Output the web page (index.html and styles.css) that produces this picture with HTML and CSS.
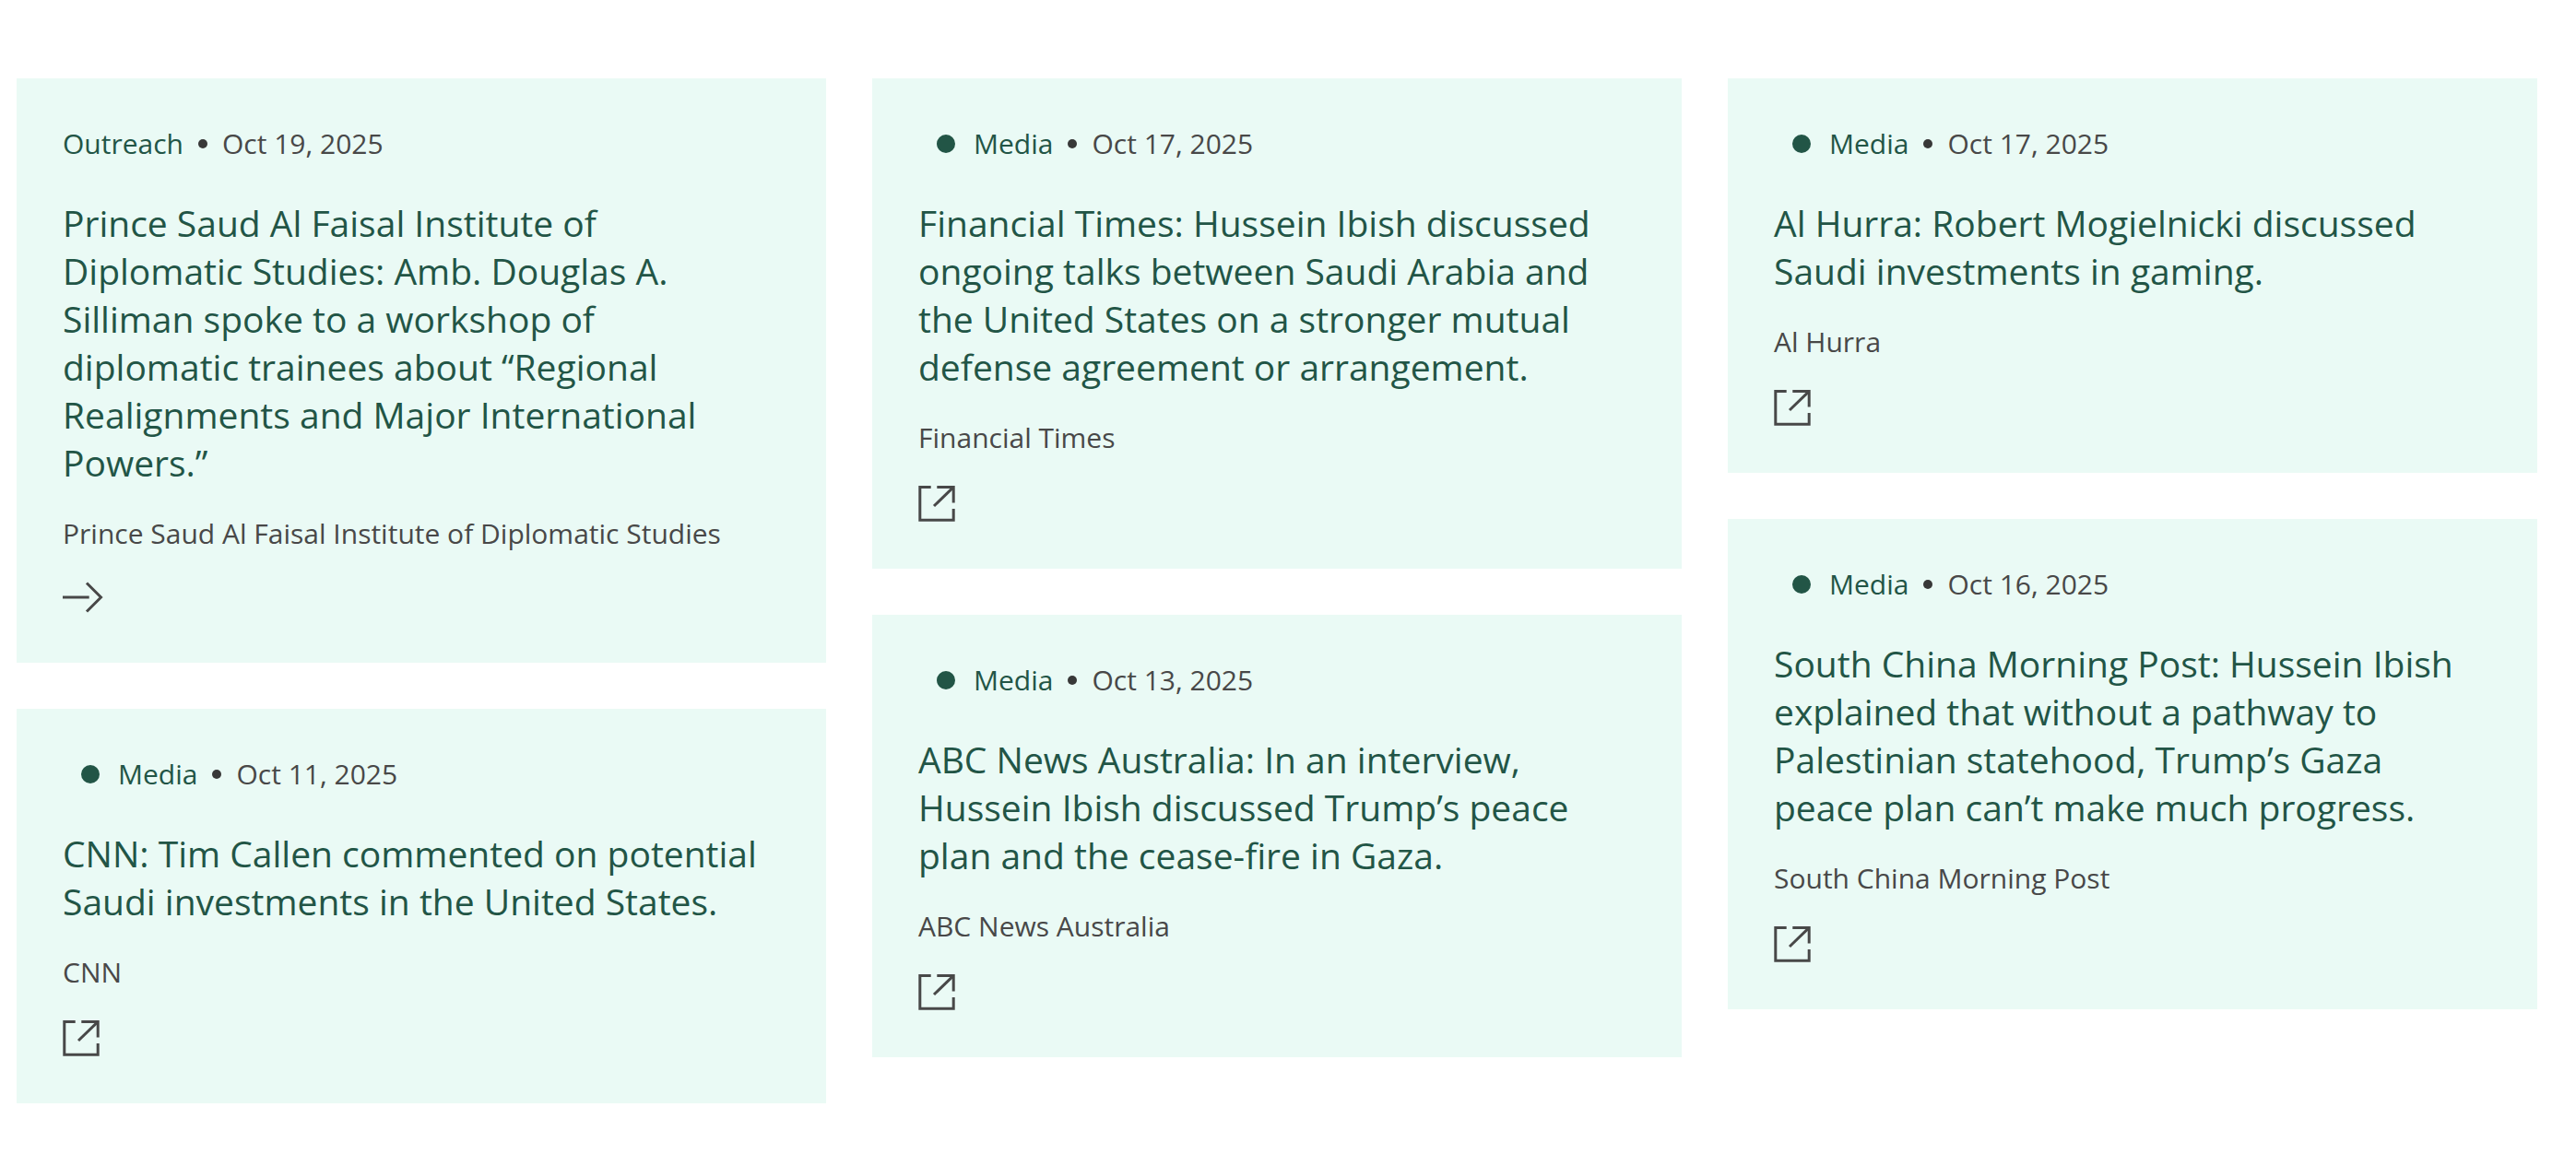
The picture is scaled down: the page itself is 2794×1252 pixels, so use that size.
FILE: index.html
```
<!DOCTYPE html>
<html lang="en">
<head>
<meta charset="UTF-8">
<meta name="viewport" content="width=device-width, initial-scale=1.0">
<title>Outreach and Media</title>
<link rel="stylesheet" href="styles.css">
</head>
<body>
<!-- shared icons -->
<svg class="sprite" aria-hidden="true">
  <symbol id="icon-external" viewBox="0 0 40 40">
    <path d="M13.7 1.4H1.8V37.2H38.2V25"/>
    <path d="M20.3 1.4H38.2V18.5"/>
    <path d="M37.8 1.8L17 22"/>
  </symbol>
  <symbol id="icon-arrow" viewBox="0 0 44 38">
    <path d="M0 17H28.7"/>
    <path d="M26 1.5L41.5 17L26 32.5"/>
  </symbol>
</svg>
<main class="columns">
  <div class="column">
    <article class="card">
      <div class="meta">
        <a class="category" href="#">Outreach</a>
        <time class="date" datetime="2025-10-19">Oct 19, 2025</time>
      </div>
      <h2 class="title"><a href="#">Prince Saud Al Faisal Institute of Diplomatic Studies: Amb. Douglas A. Silliman spoke to a workshop of diplomatic trainees about “Regional Realignments and Major International Powers.”</a></h2>
      <p class="source">Prince Saud Al Faisal Institute of Diplomatic Studies</p>
      <a class="more" href="#" aria-label="Read more"><svg class="icon-arrow"><use href="#icon-arrow"/></svg></a>
    </article>
    <article class="card">
      <div class="meta">
        <a class="category media" href="#">Media</a>
        <time class="date" datetime="2025-10-11">Oct 11, 2025</time>
      </div>
      <h2 class="title"><a href="#">CNN: Tim Callen commented on potential Saudi investments in the United States.</a></h2>
      <p class="source">CNN</p>
      <a class="more" href="#" aria-label="Open article"><svg class="icon-external"><use href="#icon-external"/></svg></a>
    </article>
  </div>
  <div class="column">
    <article class="card">
      <div class="meta">
        <a class="category media" href="#">Media</a>
        <time class="date" datetime="2025-10-17">Oct 17, 2025</time>
      </div>
      <h2 class="title"><a href="#">Financial Times: Hussein Ibish discussed ongoing talks between Saudi Arabia and the United States on a stronger mutual defense agreement or arrangement.</a></h2>
      <p class="source">Financial Times</p>
      <a class="more" href="#" aria-label="Open article"><svg class="icon-external"><use href="#icon-external"/></svg></a>
    </article>
    <article class="card">
      <div class="meta">
        <a class="category media" href="#">Media</a>
        <time class="date" datetime="2025-10-13">Oct 13, 2025</time>
      </div>
      <h2 class="title"><a href="#">ABC News Australia: In an interview, Hussein Ibish discussed Trump’s peace plan and the cease-fire in Gaza.</a></h2>
      <p class="source">ABC News Australia</p>
      <a class="more" href="#" aria-label="Open article"><svg class="icon-external"><use href="#icon-external"/></svg></a>
    </article>
  </div>
  <div class="column">
    <article class="card">
      <div class="meta">
        <a class="category media" href="#">Media</a>
        <time class="date" datetime="2025-10-17">Oct 17, 2025</time>
      </div>
      <h2 class="title"><a href="#">Al Hurra: Robert Mogielnicki discussed Saudi investments in gaming.</a></h2>
      <p class="source">Al Hurra</p>
      <a class="more" href="#" aria-label="Open article"><svg class="icon-external"><use href="#icon-external"/></svg></a>
    </article>
    <article class="card">
      <div class="meta">
        <a class="category media" href="#">Media</a>
        <time class="date" datetime="2025-10-16">Oct 16, 2025</time>
      </div>
      <h2 class="title"><a href="#">South China Morning Post: Hussein Ibish explained that without a pathway to Palestinian statehood, Trump’s Gaza peace plan can’t make much progress.</a></h2>
      <p class="source">South China Morning Post</p>
      <a class="more" href="#" aria-label="Open article"><svg class="icon-external"><use href="#icon-external"/></svg></a>
    </article>
  </div>
</main>
</body>
</html>
```
FILE: styles.css
```
* {
  box-sizing: border-box;
}

body {
  margin: 0;
  background-color: #ffffff;
  color: #484848;
  font-family: "Open Sans", "Noto Sans", sans-serif;
  font-size: 30px;
  line-height: 42px;
}

a {
  color: inherit;
  text-decoration: none;
}

.sprite {
  position: absolute;
  width: 0;
  height: 0;
}

.columns {
  display: grid;
  grid-template-columns: repeat(3, 1fr);
  gap: 50px;
  align-items: start;
  padding: 85px 42px 50px 18px;
}

.column {
  display: flex;
  flex-direction: column;
  gap: 50px;
}

.card {
  padding: 50px;
  background-color: #eafaf5;
}

.meta {
  display: flex;
  align-items: center;
  gap: 16px;
  margin-bottom: 39px;
}

.category {
  display: flex;
  align-items: center;
  color: #225546;
}

.media::before {
  content: "";
  width: 20px;
  height: 20px;
  margin: 0 20px;
  border-radius: 50%;
  background-color: #225546;
}

.date {
  display: flex;
  align-items: center;
  gap: 16px;
}

.date::before {
  content: "";
  width: 10px;
  height: 10px;
  border-radius: 50%;
  background-color: #383838;
}

.title {
  margin: 0 0 30px;
  color: #225546;
  font-size: 39px;
  font-weight: 400;
  line-height: 52px;
}

.source {
  margin: 0 0 31px;
}

.more {
  display: block;
  width: fit-content;
}

.more svg {
  display: block;
  fill: none;
  stroke: #484848;
  stroke-width: 3;
}

.icon-external {
  width: 40px;
  height: 40px;
}

.icon-arrow {
  width: 44px;
  height: 38px;
}
```
